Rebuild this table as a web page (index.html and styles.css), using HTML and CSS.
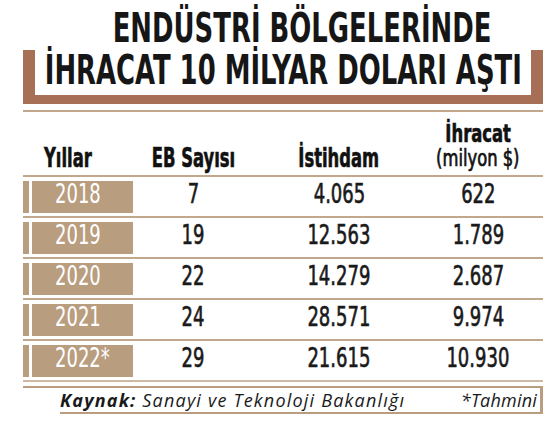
FILE: index.html
```html
<!DOCTYPE html>
<html lang="tr">
<head>
<meta charset="utf-8">
<link rel="stylesheet" href="styles.css">
</head>
<body>
<div class="page">
  <div class="headline">
    <div class="title-row first"><span class="title-text">ENDÜSTRİ BÖLGELERİNDE</span></div>
    <div class="bracket">
      <div class="title-row"><span class="title-text">İHRACAT 10 MİLYAR DOLARI AŞTI</span></div>
    </div>
  </div>
  <div class="rule"></div>
  <div class="table">
    <div class="head">
      <div class="h-year"><span class="hq">Yıllar</span></div>
      <div class="h-col"><span class="hq">EB Sayısı</span></div>
      <div class="h-col"><span class="hq">İstihdam</span></div>
      <div class="h-col h-two"><span class="hq">İhracat</span><span class="hq sub">(milyon $)</span></div>
    </div>
    <div class="row"><div class="strip"></div><div class="gap"></div><div class="year"><span class="sq">2018</span></div><div class="num"><span class="sq">7</span></div><div class="num"><span class="sq">4.065</span></div><div class="num"><span class="sq">622</span></div></div>
    <div class="row"><div class="strip"></div><div class="gap"></div><div class="year"><span class="sq">2019</span></div><div class="num"><span class="sq">19</span></div><div class="num"><span class="sq">12.563</span></div><div class="num"><span class="sq">1.789</span></div></div>
    <div class="row"><div class="strip"></div><div class="gap"></div><div class="year"><span class="sq">2020</span></div><div class="num"><span class="sq">22</span></div><div class="num"><span class="sq">14.279</span></div><div class="num"><span class="sq">2.687</span></div></div>
    <div class="row"><div class="strip"></div><div class="gap"></div><div class="year"><span class="sq">2021</span></div><div class="num"><span class="sq">24</span></div><div class="num"><span class="sq">28.571</span></div><div class="num"><span class="sq">9.974</span></div></div>
    <div class="row last"><div class="strip"></div><div class="gap"></div><div class="year"><span class="sq">2022*</span></div><div class="num"><span class="sq">29</span></div><div class="num"><span class="sq">21.615</span></div><div class="num"><span class="sq">10.930</span></div></div>
  </div>
  <div class="source-wrap">
    <div class="source">
      <span class="src-main"><b>Kaynak:</b> Sanayi ve Teknoloji Bakanlığı</span>
      <span class="src-note">*Tahmini</span>
    </div>
  </div>
</div>
</body>
</html>
```

FILE: styles.css
```css
html, body {
  margin: 0;
  padding: 0;
  background: #ffffff;
}

body {
  width: 551px;
  height: 421px;
  overflow: hidden;
  font-family: "DejaVu Sans Condensed", "DejaVu Sans", sans-serif;
  color: #1b1b1b;
}

.page {
  margin-left: 23px;
  width: 520px;
  padding-top: 8px;
}

.title-row {
  display: flex;
  justify-content: center;
  height: 40px;
  line-height: 40px;
  font-size: 40px;
  font-weight: 700;
  white-space: nowrap;
  color: #161616;
}

.title-text {
  display: inline-block;
  flex: none;
  transform: scaleX(0.72);
  transform-origin: center;
}

.title-row.first {
  margin-bottom: 2px;
  padding-left: 38px;
}

.bracket {
  border-left: 12px solid #a66f56;
  border-right: 12px solid #a66f56;
  border-bottom: 9px solid #a66f56;
  padding-bottom: 5px;
}

.rule {
  margin-top: 6px;
  height: 2px;
  background: #c1a78b;
}

.sq,
.hq {
  display: inline-block;
  white-space: nowrap;
  transform-origin: center;
}

.sq {
  transform: scaleX(0.77);
}

.hq {
  transform: scaleX(0.7);
  -webkit-text-stroke: 0.6px #111;
}

.head {
  display: grid;
  grid-template-columns: 110px 120px 172px 106px 12px;
  grid-template-rows: 58px;
  align-items: end;
  height: 58px;
  padding-bottom: 5px;
  font-size: 26px;
  line-height: 24px;
  font-weight: 700;
  color: #111;
}

.h-year {
  padding-left: 21px;
}

.h-year .hq {
  transform-origin: left center;
}

.h-col {
  text-align: center;
  white-space: nowrap;
}

.h-two {
  display: flex;
  flex-direction: column;
  align-items: center;
  font-size: 24px;
}

.h-two .hq {
  transform: scaleX(0.76);
}

.h-two .sub {
  font-size: 23px;
  line-height: 23px;
  margin-top: 1px;
  transform: scaleX(0.79);
  font-weight: 400;
  -webkit-text-stroke: 0.7px #111;
}

.row {
  display: grid;
  grid-template-columns: 6px 3px 101px 120px 172px 106px 12px;
  border-top: 2px solid #c1a78b;
  padding: 4px 0 3px;
}

.strip {
  background: #b99d7f;
}

.year {
  background: #b99d7f;
  color: #ffffff;
  padding-left: 23px;
  font-size: 26px;
  line-height: 26px;
  padding-bottom: 6px;
  height: 26px;
}

.year .sq {
  transform-origin: left center;
}

.num {
  text-align: center;
  font-size: 26px;
  line-height: 26px;
  padding-bottom: 6px;
  color: #1a1a1a;
  -webkit-text-stroke: 0.6px #1a1a1a;
}

.row.last {
  border-bottom: 2px solid #cdb9a4;
}

.source-wrap {
  margin-top: 4px;
  border-top: 2px solid #b99d7f;
}

.source {
  margin-left: 37px;
  border-right: 3px solid #b99d7f;
  border-bottom: 2px solid #b99d7f;
  display: flex;
  justify-content: space-between;
  height: 24px;
  line-height: 24px;
  padding-right: 3px;
  font-family: "Open Sans", "Noto Sans", sans-serif;
  font-style: italic;
  font-size: 18px;
  color: #1a1a1a;
}

.src-main {
  letter-spacing: 1.2px;
}

.src-note {
  letter-spacing: 0.2px;
}

.source b {
  font-weight: 700;
}
```
